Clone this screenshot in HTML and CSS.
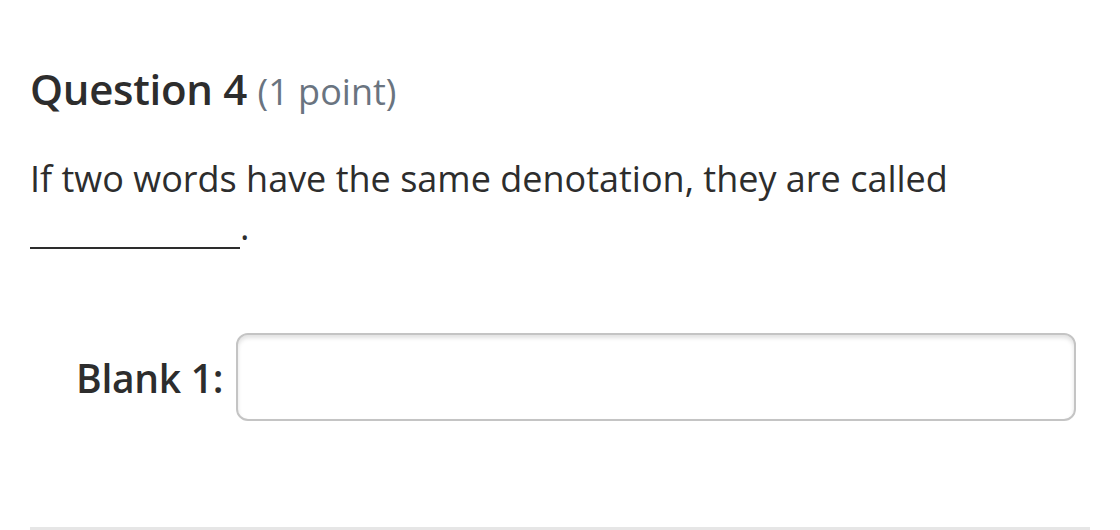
FILE: index.html
```html
<!DOCTYPE html>
<html>
<head>
<meta charset="utf-8">
<link rel="stylesheet" href="styles.css">
</head>
<body>
<div class="page">
  <h2 class="q-title">Question 4 <span class="pts">(1 point)</span></h2>
  <p class="q-text">If two words have the same denotation, they are called <span class="blank"></span>.</p>
  <div class="answer">
    <label class="lbl">Blank 1:</label>
    <div class="field"></div>
  </div>
  <div class="divider"></div>
</div>
</body>
</html>
```
FILE: styles.css
```css
html, body {
  margin: 0;
  padding: 0;
  background: #ffffff;
}
body {
  font-family: "Open Sans", "Liberation Sans", sans-serif;
  color: #2d2d2d;
  width: 1120px;
  height: 530px;
  overflow: hidden;
}
.page {
  padding: 64px 30px 0 30px;
}
.q-title {
  margin: 0;
  font-size: 42px;
  font-weight: 600;
  line-height: 50px;
  color: #2d2d2d;
  letter-spacing: -0.3px;
}
.pts {
  font-size: 36px;
  font-weight: 400;
  line-height: 1;
  color: #6a7480;
  letter-spacing: 0;
}
.q-text {
  margin: 41px 0 0 0;
  font-size: 36px;
  line-height: 48px;
  width: 960px;
}
.blank {
  display: inline-block;
  width: 210px;
  border-bottom: 2px solid #2d2d2d;
  vertical-align: -9px;
}
.answer {
  display: flex;
  align-items: center;
  margin-top: 82px;
  padding-left: 46px;
  gap: 13px;
}
.lbl {
  font-size: 39px;
  font-weight: 600;
  color: #2d2d2d;
  letter-spacing: -0.3px;
}
.field {
  flex: 1;
  margin-right: 14px;
  height: 88px;
  border: 2px solid #c4c4c4;
  border-radius: 12px;
  box-shadow: inset 0 3px 4px rgba(0,0,0,0.12);
  box-sizing: border-box;
}
.divider {
  margin-top: 106px;
  height: 4px;
  background: #e6e6e6;
}
```
